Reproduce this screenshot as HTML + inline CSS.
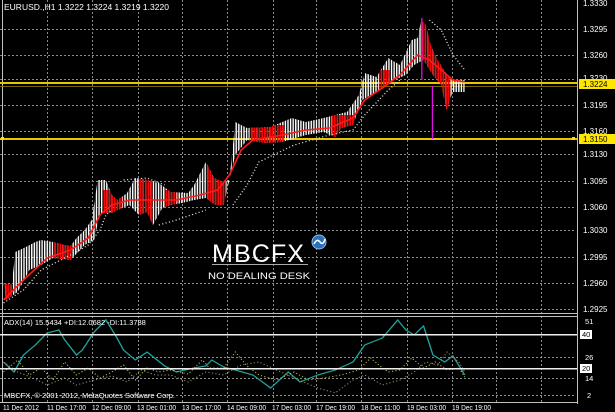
<!DOCTYPE html>
<html><head><meta charset="utf-8"><style>
html,body{margin:0;padding:0;background:#000;}
svg{display:block;font-family:"Liberation Sans",sans-serif;}
</style></head><body>
<svg width="615" height="412" viewBox="0 0 615 412" xmlns="http://www.w3.org/2000/svg">
<defs>
<pattern id="hw" width="2.2" height="4" patternUnits="userSpaceOnUse"><rect x="0" y="0" width="1.2" height="4" fill="#fff"/></pattern>
<pattern id="hr" width="2.2" height="4" patternUnits="userSpaceOnUse"><rect x="0" y="0" width="1.4" height="4" fill="#f00"/></pattern>
<clipPath id="band"><polygon points="3,283 10,285 13,252 22,247 30,242 35,240 45,242 55,245 60,246 65,238 72,230 78,220 83,180 90,180 95,195 100,200 108,193 115,178 125,180 135,183 145,192 160,193 165,185 175,162 182,178 190,182 195,180 200,122 210,128 230,127 248,118 260,122 275,118 285,115 295,112 305,95 310,73 320,77 330,58 340,65 350,40 355,38 358,20 362,25 366,45 372,60 380,75 385,80 395,80 395,92 385,92 382,100 380,112 375,85 368,75 360,60 352,65 345,75 335,80 325,88 315,95 308,100 300,125 290,128 285,137 275,132 260,135 240,142 225,143 210,140 200,155 195,180 190,205 183,205 175,198 165,200 155,203 145,205 138,208 130,225 125,212 118,215 110,205 100,210 95,213 85,213 80,240 72,245 60,260 45,258 35,265 25,270 15,292 5,300"/></clipPath>
</defs>
<rect width="615" height="412" fill="#000"/>
<g stroke="#8a8a8a" stroke-width="1" stroke-dasharray="2 2">
<path d="M0 29.5H576M0 55.5H576M0 79.5H576M0 105.5H576M0 131.5H576M0 154.5H576M0 181.5H576M0 207.5H576M0 230.5H576M0 257.5H576M0 283.5H576M0 309.5H576"/>
<path d="M0 357.5H576M0 378.5H576M0 395.5H576"/>
<path d="M47.5 0V402M92.5 0V402M138.5 0V402M182.5 0V402M227.5 0V402M273.5 0V402M316.5 0V402M361.5 0V402M407.5 0V402M452.5 0V402M496.5 0V402M541.5 0V402"/>
</g>
<g stroke="#c0c0c0" stroke-width="1" fill="none">
<path d="M577.5 0V404"/>
<path d="M0 313.5H577M0 316.5H577M0 402.5H577"/>
<path d="M2.5 0V402"/>
</g>
<rect x="0" y="82" width="577" height="2" fill="#e6c800"/>
<rect x="0" y="86" width="577" height="1" fill="#776600"/>
<rect x="0" y="138" width="577" height="2" fill="#e6c800"/>
<rect x="1" y="137" width="3" height="3" fill="#ffe000"/>
<rect x="572" y="137" width="3" height="3" fill="#ffe000"/>
<g transform="scale(1.1765,1)">
<g clip-path="url(#band)">
<rect x="0" y="0" width="400" height="313" fill="url(#hw)"/>
<g fill="url(#hr)">
<rect x="3" y="0" width="8" height="313"/>
<rect x="45" y="0" width="16" height="313"/>
<rect x="88" y="190" width="16" height="40"/>
<rect x="118" y="0" width="12" height="313"/>
<rect x="140" y="190" width="10" height="30"/>
<rect x="176" y="0" width="16" height="313"/>
<rect x="212" y="125" width="30" height="30"/>
<rect x="282" y="115" width="20" height="25"/>
<rect x="322" y="70" width="10" height="30"/>
<rect x="359" y="0" width="24" height="313"/>
</g>
</g>
<polyline fill="none" stroke="#ff1a1a" stroke-width="1.5" points="3,300 20,280 40,258 60,250 75,238 85,215 95,205 110,200 130,200 150,200 170,195 185,190 195,175 205,150 215,140 240,135 260,130 280,128 300,118 310,100 325,88 340,75 355,55 365,60 375,70 385,80 395,82"/>
<g fill="none" stroke="#ddd" stroke-width="1.2" stroke-dasharray="1 2">
<polyline points="3,303 20,290 35,270 55,258 65,252 75,245 85,230 90,215 95,210"/>
<polyline points="105,180 125,178 140,185"/>
<polyline points="135,225 150,220 175,210"/>
<polyline points="198,205 210,185 220,162 250,145 280,135 300,130 310,115 330,90 340,80"/>
<polyline points="365,20 375,30 385,55 395,70"/>
</g>
<rect x="358" y="18" width="1.1" height="62" fill="#e010e0"/>
<rect x="367" y="86" width="1.1" height="53" fill="#e010e0"/>
<polyline fill="none" stroke="#1fa29a" stroke-width="1.2" points="3,362 12,372 20,355 30,345 40,333 50,330 55,340 65,355 70,350 80,332 90,320 98,335 105,350 115,360 125,352 140,366 150,372 165,368 175,366 180,360 190,367 200,370 215,375 230,388 245,372 255,382 270,375 285,370 300,362 310,345 325,338 338,320 345,330 352,335 360,326 368,355 378,362 385,356 395,375"/>
<polyline fill="none" stroke="#b8c040" stroke-width="1" stroke-dasharray="1 2" points="3,372 15,360 25,375 35,368 45,380 55,362 65,375 75,368 85,378 95,372 105,365 115,380 125,368 135,372 145,370 160,374 172,360 178,368 190,368 200,352 210,366 220,375 235,380 250,372 262,380 275,378 290,375 305,370 315,358 322,365 330,372 340,370 350,358 360,368 370,362 380,370 390,368 395,377"/>
<polyline fill="none" stroke="#a09070" stroke-width="1" stroke-dasharray="1 2" points="3,362 15,372 28,378 40,385 55,378 65,385 80,380 95,376 108,382 120,370 132,375 145,375 160,382 175,372 190,375 205,365 220,362 235,370 250,378 270,388 285,393 300,380 310,375 325,385 340,380 352,372 362,362 372,365 380,352 390,362 395,372"/>
</g>
<text x="4" y="10" font-size="8.5" fill="#fff">EURUSD.,H1  1.3222 1.3224 1.3219 1.3220</text>
<g font-size="8" fill="#fff">
<text x="583" y="6">1.3330</text>
<text x="583" y="32">1.3295</text>
<text x="583" y="58">1.3260</text>
<text x="583" y="81">1.3230</text>
<text x="583" y="108">1.3195</text>
<text x="583" y="134">1.3160</text>
<text x="583" y="157">1.3130</text>
<text x="583" y="184">1.3095</text>
<text x="583" y="210">1.3060</text>
<text x="583" y="233">1.3030</text>
<text x="583" y="260">1.2995</text>
<text x="583" y="286">1.2960</text>
<text x="583" y="312">1.2925</text>
</g>
<rect x="579" y="79" width="36" height="10" fill="#ffe600"/>
<text x="583" y="87" font-size="8" fill="#000">1.3224</text>
<rect x="579" y="134" width="36" height="10" fill="#ffe600"/>
<text x="583" y="142" font-size="8" fill="#000">1.3150</text>
<text x="212" y="262" font-size="25" fill="#fff" letter-spacing="1" textLength="93" lengthAdjust="spacingAndGlyphs">MBCFX</text>
<rect x="212" y="264" width="96" height="1" fill="#aaa"/>
<text x="208" y="279" font-size="9.5" fill="#fff" textLength="102" lengthAdjust="spacingAndGlyphs">NO DEALING DESK</text>
<circle cx="319" cy="242" r="7" fill="#2a6fb8" stroke="#8fc0ee" stroke-width="1"/>
<path d="M314 244q3-6 6-2t5-3" stroke="#fff" stroke-width="1.5" fill="none"/>
<text x="4" y="325" font-size="7.5" fill="#fff">ADX(14) 15.5434 +DI:12.0682 -DI:11.3788</text>
<rect x="0" y="334" width="577" height="1.5" fill="#eee"/>
<rect x="0" y="368" width="577" height="1.5" fill="#eee"/>
<text x="4" y="398" font-size="7.5" fill="#fff">MBCFX, © 2001-2012, MetaQuotes Software Corp.</text>
<g font-size="7.5" fill="#fff">
<text x="585" y="324">51</text>
<rect x="580" y="330" width="12" height="9" fill="#fff"/>
<text x="582" y="337" fill="#000">40</text>
<text x="585" y="360">26</text>
<rect x="580" y="364" width="12" height="9" fill="#fff"/>
<text x="582" y="371" fill="#000">20</text>
<text x="585" y="381">14</text>
<text x="587" y="398">2</text>
</g>
<g font-size="7" fill="#fff" lengthAdjust="spacingAndGlyphs">
<text x="3" y="410" textLength="36" lengthAdjust="spacingAndGlyphs">11 Dec 2012</text>
<text x="47" y="410" textLength="39" lengthAdjust="spacingAndGlyphs">11 Dec 17:00</text>
<text x="92" y="410" textLength="39" lengthAdjust="spacingAndGlyphs">12 Dec 09:00</text>
<text x="137" y="410" textLength="39" lengthAdjust="spacingAndGlyphs">13 Dec 01:00</text>
<text x="182" y="410" textLength="39" lengthAdjust="spacingAndGlyphs">13 Dec 17:00</text>
<text x="227" y="410" textLength="39" lengthAdjust="spacingAndGlyphs">14 Dec 09:00</text>
<text x="272" y="410" textLength="39" lengthAdjust="spacingAndGlyphs">17 Dec 03:00</text>
<text x="316" y="410" textLength="39" lengthAdjust="spacingAndGlyphs">17 Dec 19:00</text>
<text x="361" y="410" textLength="39" lengthAdjust="spacingAndGlyphs">18 Dec 11:00</text>
<text x="407" y="410" textLength="39" lengthAdjust="spacingAndGlyphs">19 Dec 03:00</text>
<text x="452" y="410" textLength="39" lengthAdjust="spacingAndGlyphs">19 Dec 19:00</text>
</g>
</svg>
</body></html>
